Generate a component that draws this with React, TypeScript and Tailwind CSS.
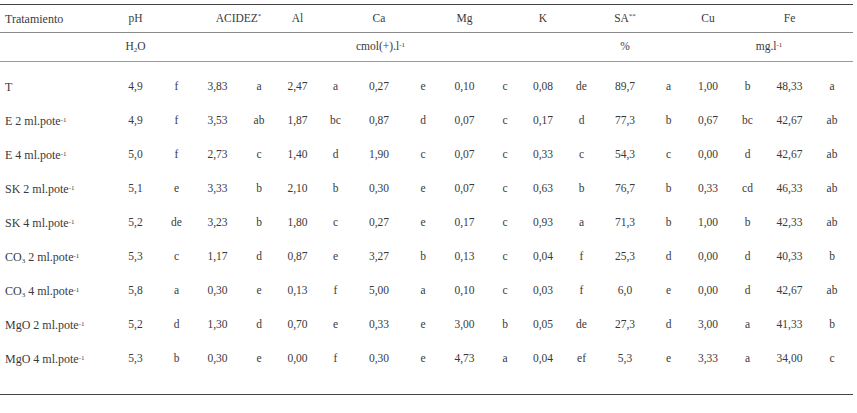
import React from "react";

type Row = { label: React.ReactNode; cells: string[] };

const Pote = ({ pre, n }: { pre: React.ReactNode; n: string }) => (
  <span>
    {pre} {n} ml.pote<sup className="text-[7px]">-1</sup>
  </span>
);

const CO3 = () => (
  <>
    CO<sub className="text-[7px]">3</sub>
  </>
);

const rows: Row[] = [
  { label: "T", cells: ["4,9", "f", "3,83", "a", "2,47", "a", "0,27", "e", "0,10", "c", "0,08", "de", "89,7", "a", "1,00", "b", "48,33", "a"] },
  { label: <Pote pre="E" n="2" />, cells: ["4,9", "f", "3,53", "ab", "1,87", "bc", "0,87", "d", "0,07", "c", "0,17", "d", "77,3", "b", "0,67", "bc", "42,67", "ab"] },
  { label: <Pote pre="E" n="4" />, cells: ["5,0", "f", "2,73", "c", "1,40", "d", "1,90", "c", "0,07", "c", "0,33", "c", "54,3", "c", "0,00", "d", "42,67", "ab"] },
  { label: <Pote pre="SK" n="2" />, cells: ["5,1", "e", "3,33", "b", "2,10", "b", "0,30", "e", "0,07", "c", "0,63", "b", "76,7", "b", "0,33", "cd", "46,33", "ab"] },
  { label: <Pote pre="SK" n="4" />, cells: ["5,2", "de", "3,23", "b", "1,80", "c", "0,27", "e", "0,17", "c", "0,93", "a", "71,3", "b", "1,00", "b", "42,33", "ab"] },
  { label: <Pote pre={<CO3 />} n="2" />, cells: ["5,3", "c", "1,17", "d", "0,87", "e", "3,27", "b", "0,13", "c", "0,04", "f", "25,3", "d", "0,00", "d", "40,33", "b"] },
  { label: <Pote pre={<CO3 />} n="4" />, cells: ["5,8", "a", "0,30", "e", "0,13", "f", "5,00", "a", "0,10", "c", "0,03", "f", "6,0", "e", "0,00", "d", "42,67", "ab"] },
  { label: <Pote pre="MgO" n="2" />, cells: ["5,2", "d", "1,30", "d", "0,70", "e", "0,33", "e", "3,00", "b", "0,05", "de", "27,3", "d", "3,00", "a", "41,33", "b"] },
  { label: <Pote pre="MgO" n="4" />, cells: ["5,3", "b", "0,30", "e", "0,00", "f", "0,30", "e", "4,73", "a", "0,04", "ef", "5,3", "e", "3,33", "a", "34,00", "c"] },
];

// label + 18 value/letter columns
const grid =
  "grid grid-cols-[115px_41px_41px_41px_42px_35px_41px_46px_42px_41px_40px_36px_41px_46px_41px_38px_41px_43px_42px]";

export default function App() {
  return (
    <div className="w-[857px] h-[413px] bg-white text-[#3a3a3a] text-[11.5px] leading-none font-['Liberation_Serif','Times_New_Roman',serif]">
      <div className="w-[853px] pt-[4px]">
        {/* header */}
        <div className={`${grid} h-[29px] items-center border-t border-[#444] border-b border-b-[#8a8a8a]`}>
          <div className="pl-[5px] text-[12px]">Tratamiento</div>
          <div className="text-center">pH</div>
          <div />
          <div className="col-span-2 text-center">
            ACIDEZ<sup className="text-[7px]">*</sup>
          </div>
          <div className="text-center">Al</div>
          <div />
          <div className="text-center">Ca</div>
          <div />
          <div className="text-center">Mg</div>
          <div />
          <div className="text-center">K</div>
          <div />
          <div className="text-center">
            SA<sup className="text-[7px]">**</sup>
          </div>
          <div />
          <div className="text-center">Cu</div>
          <div />
          <div className="text-center">Fe</div>
          <div />
        </div>

        {/* units */}
        <div className={`${grid} h-[29px] items-center border-b border-[#9a9a9a]`}>
          <div />
          <div className="text-center">
            H<sub className="text-[7px]">2</sub>O
          </div>
          <div />
          <div />
          <div />
          <div />
          <div />
          <div className="text-center whitespace-nowrap">
            cmol(+).l<sup className="text-[7px]">-1</sup>
          </div>
          <div />
          <div />
          <div />
          <div />
          <div />
          <div className="text-center">%</div>
          <div />
          <div />
          <div className="col-span-2 text-center whitespace-nowrap">
            mg.l<sup className="text-[7px]">-1</sup>
          </div>
          <div />
        </div>

        {/* body */}
        <div className="pt-[8px] pb-[18px] border-b border-[#444]">
          {rows.map((r, i) => (
            <div key={i} className={`${grid} h-[34px] items-center`}>
              <div className="pl-[5px] whitespace-nowrap text-[12px]">{r.label}</div>
              {r.cells.map((c, j) => (
                <div key={j} className="text-center">
                  {c}
                </div>
              ))}
            </div>
          ))}
        </div>
      </div>
    </div>
  );
}
